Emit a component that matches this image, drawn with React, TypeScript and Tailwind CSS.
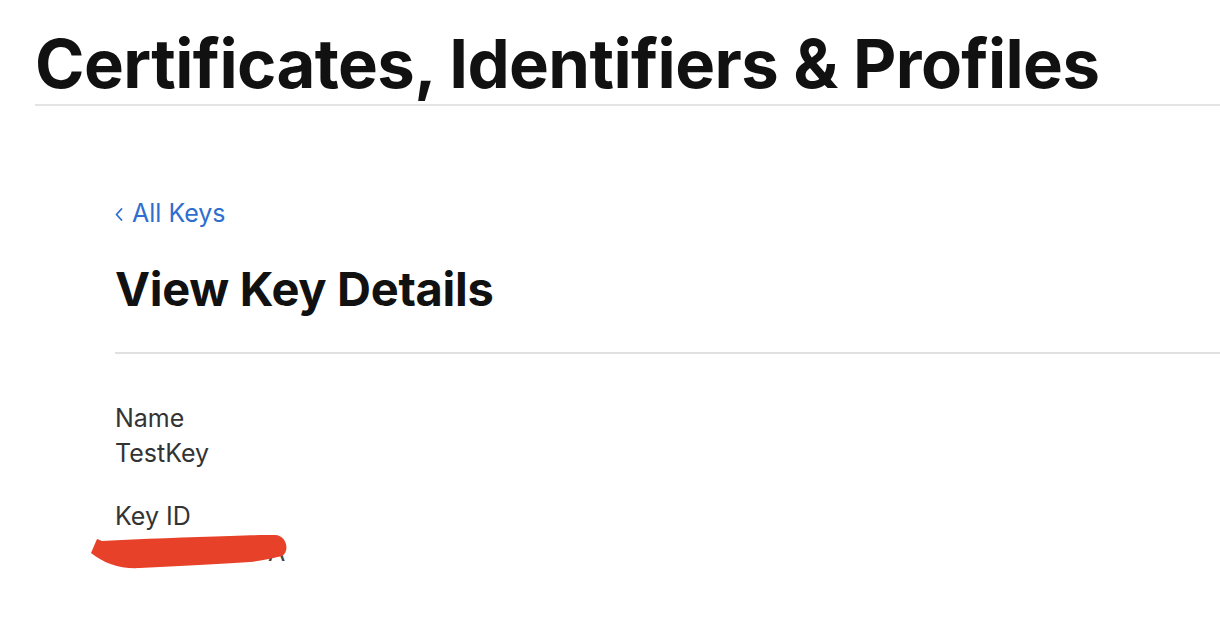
const App = () => {
  return (
    <div className="min-h-screen bg-white font-['Inter','Noto_Sans',sans-serif] text-[#111]">
      {/* Page header */}
      <header className="pl-[35px] pt-[24px]">
        <h1 className="text-[67px] font-bold leading-[80px] tracking-[-0.6px] text-[#111]">
          Certificates, Identifiers &amp; Profiles
        </h1>
        <div className="h-[2px] bg-[#e4e4e4]" />
      </header>

      <main className="pl-[115px] pt-[92px]">
        <a href="#" className="flex items-center gap-[9px] text-[25px] leading-[30px] text-[#2f6ecf]">
          <svg width="8" height="13" viewBox="0 0 8 13" className="mt-[3px]">
            <polyline points="6.5,1 1.5,6.5 6.5,12" fill="none" stroke="currentColor" strokeWidth="1.8" strokeLinecap="round" strokeLinejoin="round" />
          </svg>
          All Keys
        </a>

        <h2 className="mt-[33px] text-[47px] font-bold leading-[56px] tracking-[-0.3px] text-[#111]">
          View Key Details
        </h2>
        <div className="mt-[35px] h-[2px] bg-[#e0e0e0]" />

        <dl className="pt-[47px] text-[25px] leading-[35px] text-[#333]">
          <dt>Name</dt>
          <dd>TestKey</dd>
          <dt className="mt-[28px]">Key ID</dt>
          <dd className="relative h-[35px]">
            <span className="absolute left-[153px] top-[1px] text-[#444]">A</span>
            {/* redaction scribble */}
            <svg className="absolute -left-[25px] top-0" width="200" height="36" viewBox="0 0 200 36">
              <path
                d="M1 19 L7 5 L12 7 C50 5 100 3 140 2 C160 1 175 1 185 1 C197 1 200 18 192 22 C180 25 170 27 160 28 C130 30 90 32 50 34 C30 35 15 30 1 19 Z"
                fill="#e8412a"
              />
            </svg>
          </dd>
        </dl>
      </main>
    </div>
  )
}

export default App
